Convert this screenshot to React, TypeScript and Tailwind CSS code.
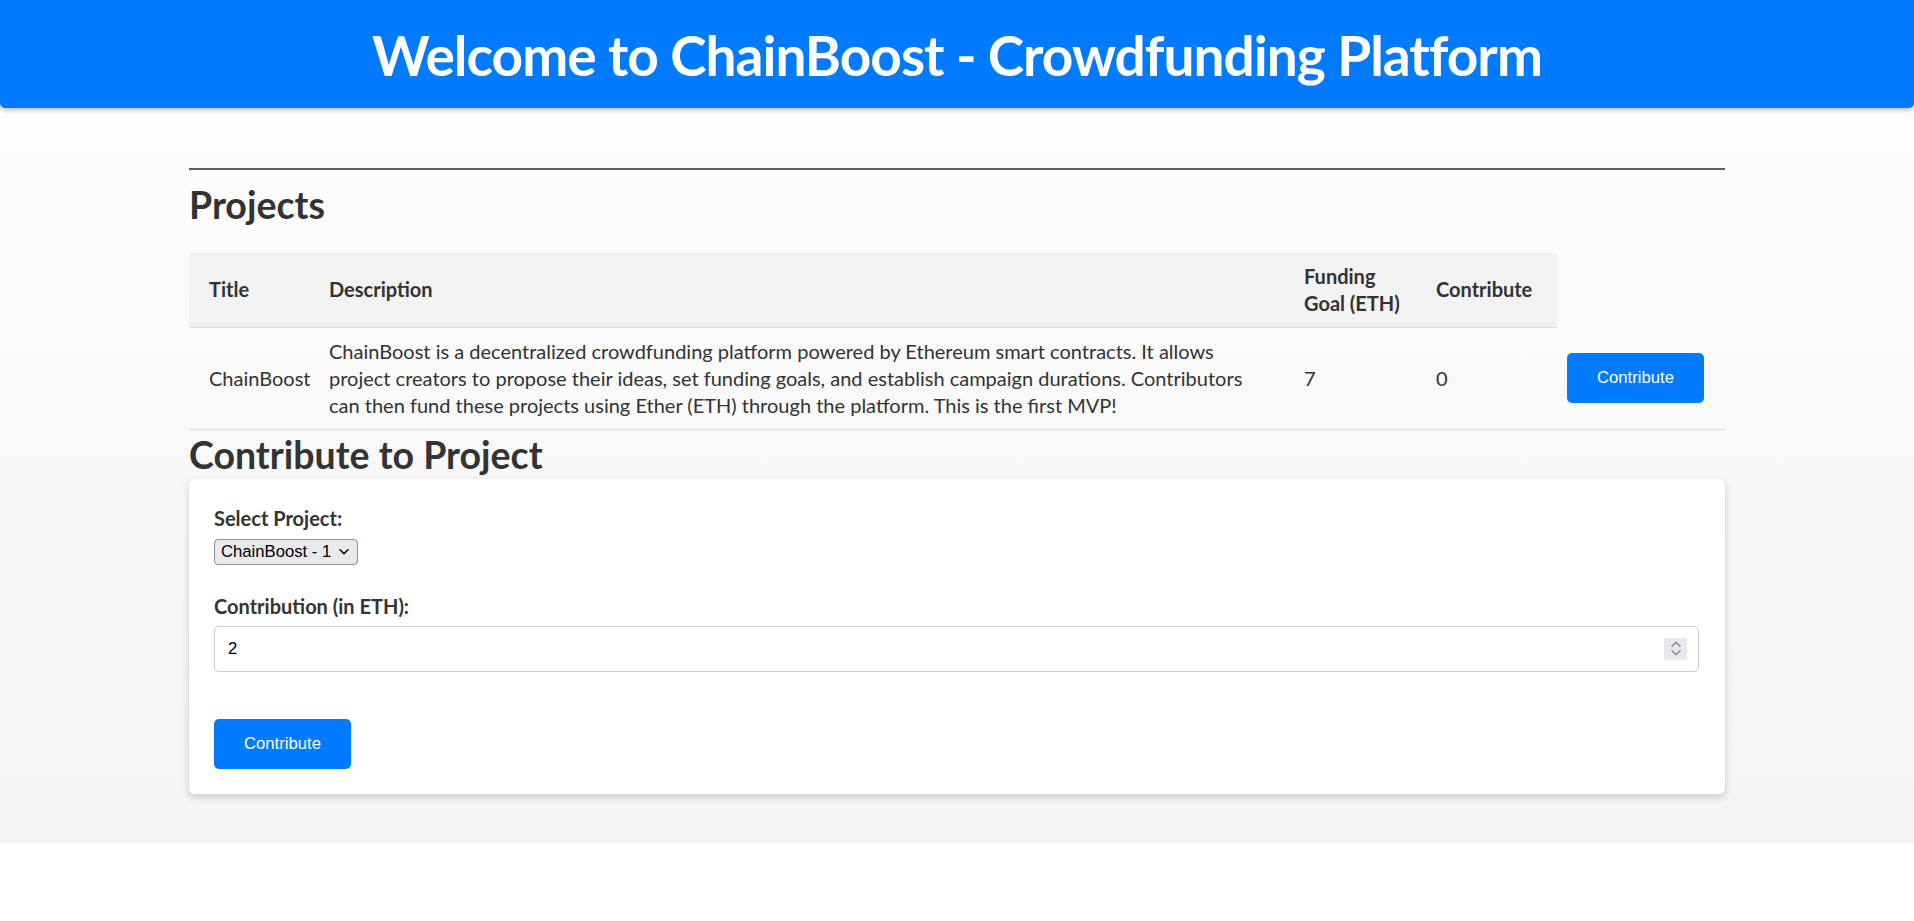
import React from "react";

const projects = [
  {
    id: 1,
    title: "ChainBoost",
    lines: [
      "ChainBoost is a decentralized crowdfunding platform powered by Ethereum smart contracts. It allows",
      "project creators to propose their ideas, set funding goals, and establish campaign durations. Contributors",
      "can then fund these projects using Ether (ETH) through the platform. This is the first MVP!",
    ],
    goal: 7,
    raised: 0,
  },
];

function Chevron({ up = false }: { up?: boolean }) {
  return (
    <svg width="10" height="6" viewBox="0 0 10 6" fill="none" className="block">
      <path
        d={up ? "M1 5.2 5 1.2 9 5.2" : "M1 0.8 5 4.8 9 0.8"}
        stroke="currentColor"
        strokeWidth="1.5"
        strokeLinecap="round"
        strokeLinejoin="round"
      />
    </svg>
  );
}

export default function App() {
  return (
    <div className="min-h-screen bg-white font-['Lato',sans-serif] text-[#333]">
      <div className="bg-linear-to-b from-[#fefefe] to-[#f4f4f4] pb-[49px]">
        <header className="flex h-[108px] items-center justify-center rounded-b-[5px] bg-[#007bff] shadow-[0_2px_5px_rgba(0,0,0,0.25)]">
          <h1 className="pt-[2px] text-[55px] font-bold leading-none tracking-[-1px] text-white">
            Welcome to ChainBoost - Crowdfunding Platform
          </h1>
        </header>

        <main className="mx-auto w-[1536px] pt-[60px]">
          <div className="h-[2px] bg-[#5e5e5e]" />
          <h2 className="mt-[10px] text-[37.5px] font-bold leading-[50px]">Projects</h2>

          <table className="mt-[23px] w-full table-fixed border-collapse text-[20px]">
            <colgroup>
              <col className="w-[120px]" />
              <col className="w-[975px]" />
              <col className="w-[132px]" />
              <col className="w-[141px]" />
              <col className="w-[168px]" />
            </colgroup>
            <thead>
              <tr>
                <th className="h-[74px] border-b border-[#dddddd] bg-[#f2f2f2] pl-[20px] text-left align-middle font-bold leading-[27px]">Title</th>
                <th className="border-b border-[#dddddd] bg-[#f2f2f2] pl-[20px] text-left align-middle font-bold leading-[27px]">Description</th>
                <th className="border-b border-[#dddddd] bg-[#f2f2f2] pl-[20px] text-left align-middle font-bold leading-[27px]">
                  Funding
                  <br />
                  Goal (ETH)
                </th>
                <th className="border-b border-[#dddddd] bg-[#f2f2f2] pl-[20px] text-left align-middle font-bold leading-[27px]">Contribute</th>
                <th />
              </tr>
            </thead>
            <tbody>
              {projects.map((p) => (
                <tr key={p.id}>
                  <td className="h-[102px] border-b border-[#dddddd] pl-[20px] align-middle leading-[27px]">{p.title}</td>
                  <td className="border-b border-[#dddddd] pl-[20px] align-middle leading-[27px] whitespace-nowrap">
                    {p.lines.map((l, i) => (
                      <div key={i}>{l}</div>
                    ))}
                  </td>
                  <td className="border-b border-[#dddddd] pl-[20px] align-middle leading-[27px]">{p.goal}</td>
                  <td className="border-b border-[#dddddd] pl-[20px] align-middle leading-[27px]">{p.raised}</td>
                  <td className="border-b border-[#dddddd] pl-[10px] align-middle">
                    <button className="h-[50px] w-[137px] rounded-[5px] bg-[#007bff] font-['Liberation_Sans',Arial,sans-serif] text-[16.67px] text-white">
                      Contribute
                    </button>
                  </td>
                </tr>
              ))}
            </tbody>
          </table>

          <h2 className="text-[37.5px] font-bold leading-[49px]">Contribute to Project</h2>

          <div className="rounded-[6px] bg-white pt-[26px] pr-[26px] pb-[25px] pl-[25px] shadow-[0_3px_8px_rgba(0,0,0,0.18)]">
            <div className="text-[20px] font-bold leading-[27px]">Select Project:</div>
            <div className="mt-[7px] flex h-[26px] w-[144px] items-center justify-between rounded-[4px] border border-[#8f8f9d] bg-[#e9e9ed] pr-[8px] pl-[6px] font-['Liberation_Sans',Arial,sans-serif] text-[16.67px] text-black">
              <span>ChainBoost - 1</span>
              <Chevron />
            </div>

            <div className="mt-[28px] text-[20px] font-bold leading-[27px]">Contribution (in ETH):</div>
            <div className="mt-[6px] flex h-[46px] items-center justify-between rounded-[5px] border border-[#cccccc] bg-white pr-[11px] pl-[13px] font-['Liberation_Sans',Arial,sans-serif] text-[16.67px] text-black">
              <span>2</span>
              <div className="flex h-[22px] w-[23px] flex-col items-center justify-center gap-[3px] bg-[#e9e9ed] text-[#8a8a99]">
                <Chevron up />
                <Chevron />
              </div>
            </div>

            <button className="mt-[47px] block h-[50px] w-[137px] rounded-[5px] bg-[#007bff] font-['Liberation_Sans',Arial,sans-serif] text-[16.67px] text-white">
              Contribute
            </button>
          </div>
        </main>
      </div>
    </div>
  );
}
